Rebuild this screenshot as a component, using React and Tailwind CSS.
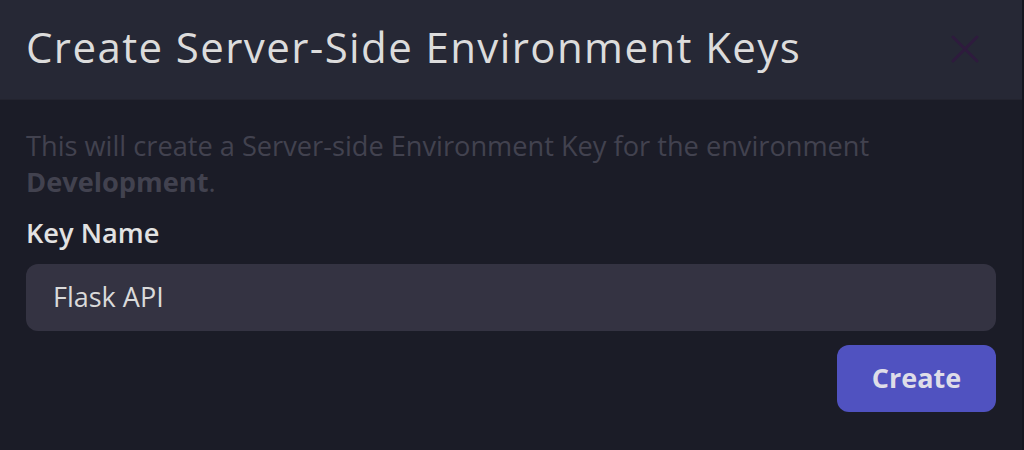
import React from 'react';

const App = () => {
    return (
        <div className="w-[1024px] h-[450px] bg-[#1b1c27] flex" style={{ fontFamily: '"Open Sans", "Noto Sans", sans-serif' }}>
            <div className="flex-1 flex flex-col border-r-2 border-[#15161f]">
                {/* Header */}
                <div className="h-[100px] bg-[#262835] flex items-center justify-between pl-[26px] pr-[42px] border-b border-[#23242f]">
                    <h1 className="text-[42px] tracking-[1.4px] text-[#dcdcdc] leading-none -mt-[6px]">Create Server-Side Environment Keys</h1>
                    <svg width="30" height="30" viewBox="0 0 30 30" className="mt-[-2px]">
                        <path d="M3 3 L27 27 M27 3 L3 27" stroke="#2e1b3d" strokeWidth="3" strokeLinecap="round" />
                    </svg>
                </div>

                {/* Body */}
                <div className="flex flex-col px-[26px] pt-[28px]">
                    <p className="text-[27.2px] leading-[36px] text-[#42424f]">
                        This will create a Server-side Environment Key for the environment <br />
                        <span className="font-bold">Development</span>.
                    </p>
                    <label className="mt-[17px] text-[27.2px] font-semibold text-[#e2e2e2] leading-[32px]">Key Name</label>
                    <div className="mt-[15px] h-[67px] bg-[#343342] rounded-[12px] flex items-center px-[27px] text-[27px] text-[#dadada]">
                        Flask API
                    </div>
                    <div className="flex justify-end mt-[14px]">
                        <button className="w-[159px] h-[67px] bg-[#5052c0] rounded-[12px] text-[27px] font-bold text-[#dedde8]">
                            Create
                        </button>
                    </div>
                </div>
            </div>
        </div>
    );
};

export default App;
